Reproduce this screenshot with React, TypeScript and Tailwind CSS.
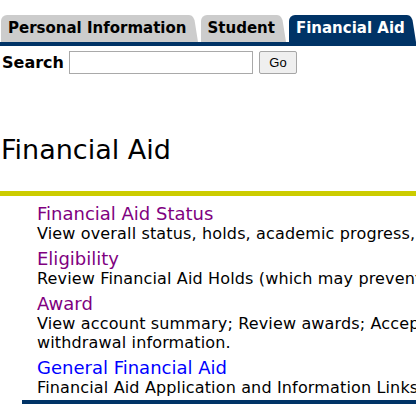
import React from "react"

const FONT = { fontFamily: '"DejaVu Sans", Verdana, sans-serif' }

function TabEdge({ color }: { color: string }) {
  // right side flare of a Banner style tab
  return (
    <svg width="9" height="27" viewBox="0 0 9 27" className="block shrink-0">
      <path d="M0 0 Q5 0 6 8 L9 27 L0 27 Z" fill={color} />
    </svg>
  )
}

function Tab({ label, active }: { label: string; active?: boolean }) {
  const color = active ? "#003366" : "#cccccc"
  return (
    <div className="flex items-end">
      <div
        className={
          "h-[27px] flex items-center pl-[7px] pr-[2px] rounded-tl-[6px] font-bold text-[15px] " +
          (active ? "bg-[#003366] text-white" : "bg-[#cccccc] text-black")
        }
      >
        {label}
      </div>
      <TabEdge color={color} />
    </div>
  )
}

const items = [
  {
    title: "Financial Aid Status",
    desc: ["View overall status, holds, academic progress, cost of attendance, and financial aid awards."],
    visited: true,
  },
  {
    title: "Eligibility",
    desc: ["Review Financial Aid Holds (which may prevent payment of awards); View student requirements."],
    visited: true,
  },
  {
    title: "Award",
    desc: ["View account summary; Review awards; Accept award offers; Display award payment schedule;", "withdrawal information."],
    visited: true,
  },
  {
    title: "General Financial Aid",
    desc: ["Financial Aid Application and Information Links"],
    visited: false,
  },
]

export default function App() {
  return (
    <div className="w-[416px] h-[417px] overflow-hidden bg-white text-black" style={FONT}>
      <div className="w-[1100px]">
        <div className="pt-[15px]">
          <div className="flex items-end pl-[1px]">
            <Tab label="Personal Information" />
            <div className="w-[3px]" />
            <Tab label="Student" />
            <div className="w-[3px]" />
            <Tab label="Financial Aid" active />
          </div>
          <div className="h-[4px] bg-[#003366]" />
        </div>

        <div className="flex items-center h-[31px] pl-[2px] pt-[2px]">
          <span className="font-bold text-[16px] mr-[5px]">Search</span>
          <input
            type="text"
            className="w-[184px] h-[23px] border border-[#a9a9a9] bg-white px-1 outline-none"
          />
          <button
            type="button"
            className="ml-[6px] w-[38px] h-[23px] border border-[#a6a6a6] rounded-[2px] bg-[#efefef] text-[13px] text-black"
            style={{ fontFamily: '"Liberation Sans", Arial, sans-serif' }}
          >
            Go
          </button>
        </div>

        <h1 className="pl-[1px] mt-[55px] text-[27px] leading-[36px] font-normal">Financial Aid</h1>

        <div className="mt-[23px] h-[5px] bg-[#cccc00]" />

        <div className="pl-[37px] pt-[7px] flex flex-col gap-[5px]">
          {items.map((it) => (
            <div key={it.title}>
              <a
                href="#"
                className={"block text-[18px] leading-[21px] " + (it.visited ? "text-[#800080]" : "text-[#0000ff]")}
              >
                {it.title}
              </a>
              {it.desc.map((d) => (
                <div key={d} className="text-[16px] leading-[19px] tracking-[0.15px] whitespace-nowrap">
                  {d}
                </div>
              ))}
            </div>
          ))}
        </div>

        <div className="ml-[22px] mt-[3px] h-[4px] bg-[#003366]" />
      </div>
    </div>
  )
}
